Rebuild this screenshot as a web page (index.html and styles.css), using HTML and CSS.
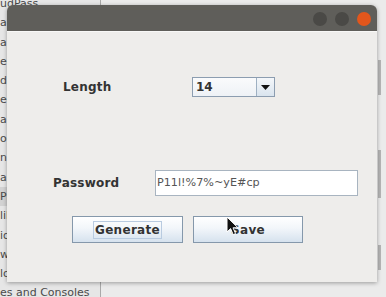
FILE: index.html
```html
<!DOCTYPE html>
<html lang="en">
<head>
  <meta charset="UTF-8" />
  <title>Password Generator</title>
  <link rel="stylesheet" href="styles.css">
</head>
<body>
  <div class="desktop">
    <ul class="sidebar">
      <li>udPass</li>
      <li>admin</li>
      <li>api</li>
      <li>eclipse</li>
      <li>data</li>
      <li>editor</li>
      <li>app</li>
      <li>ogg</li>
      <li>native</li>
      <li>assets</li>
      <li class="selected">Properties</li>
      <li>lib</li>
      <li>iql</li>
      <li>www</li>
      <li>logs</li>
      <li>es and Consoles</li>
    </ul>
    <div class="scrollbar">
      <span class="thumb t1"></span>
      <span class="thumb t2"></span>
      <span class="thumb t3"></span>
    </div>

    <div class="window">
      <div class="titlebar">
        <span class="dot"></span>
        <span class="dot"></span>
        <span class="dot close"></span>
      </div>
      <div class="content">
        <div class="row row-length">
          <label class="label length-label">Length</label>
          <div class="combo">
            <span class="combo-value">14</span>
            <span class="combo-arrow">
              <svg width="9" height="5" viewBox="0 0 9 5"><path d="M0 0h9L4.5 5z" fill="#111"/></svg>
            </span>
          </div>
        </div>
        <div class="row row-password">
          <label class="label password-label">Password</label>
          <div class="field">P11l!%7%~yE#cp</div>
        </div>
        <div class="row row-buttons">
          <button class="btn generate"><span class="focus">Generate</span></button>
          <button class="btn save">Save</button>
        </div>
      </div>
    </div>

    <svg class="cursor" width="14" height="20" viewBox="0 0 14 20">
      <path d="M1 1v15l3.6-3.4 2.6 6 2.4-1-2.6-5.8H12z" fill="#111" stroke="#fff" stroke-width="1"/>
    </svg>
  </div>
</body>
</html>
```

FILE: styles.css
```css
* {
  box-sizing: border-box;
}

html, body {
  margin: 0;
  padding: 0;
  width: 100%;
  height: 100%;
  overflow: hidden;
  background: #ebebeb;
  font-family: 'DejaVu Sans', sans-serif;
}

.desktop {
  position: relative;
  width: 386px;
  height: 297px;
  display: flex;
}

.sidebar {
  list-style: none;
  margin: -6px 0 0;
  padding: 0;
  width: 101px;
  border-right: 1px solid #a9a9a9;
  background: #e6e6e6;
  font-size: 11px;
  line-height: 19.3px;
  color: #4a4a4a;
  white-space: nowrap;
  overflow: hidden;
}

.sidebar li {
  padding-left: 0;
}

.sidebar li.selected {
  background: #d2d2d2;
}

.scrollbar {
  flex: 1;
  position: relative;
}

.thumb {
  position: absolute;
  right: 5px;
  width: 3px;
  background: #b4b4b4;
}

.t1 { top: 60px; height: 35px; }
.t2 { top: 150px; height: 48px; }
.t3 { top: 245px; height: 25px; }

.window {
  position: absolute;
  left: 7px;
  top: 5px;
  width: 370px;
  height: 277px;
  display: flex;
  flex-direction: column;
  border-radius: 6px 6px 0 0;
  box-shadow: 0 1px 4px rgba(0, 0, 0, 0.35);
  overflow: hidden;
}

.titlebar {
  height: 26px;
  background: #5f5e5a;
  display: flex;
  justify-content: flex-end;
  align-items: center;
  gap: 8px;
  padding-right: 6px;
  padding-top: 1px;
}

.dot {
  width: 14px;
  height: 14px;
  border-radius: 50%;
  background: #4a4946;
}

.dot.close {
  background: #e2561c;
}

.content {
  flex: 1;
  background: #eeedeb;
  border-top: 1px solid #f8f8f7;
  display: flex;
  flex-direction: column;
}

.row {
  display: flex;
  align-items: center;
}

.label {
  font-size: 12px;
  font-weight: bold;
  color: #333;
  letter-spacing: 0.2px;
}

.row-length {
  margin-top: 45px;
  height: 20px;
}

.length-label {
  padding-left: 56px;
  width: 185px;
}

.combo {
  width: 83px;
  height: 20px;
  display: flex;
  border: 1px solid #8c9db0;
  background: linear-gradient(#fafbfc, #eef2f6);
}

.combo-value {
  flex: 1;
  font-size: 12px;
  font-weight: bold;
  color: #333;
  padding-left: 3px;
  line-height: 18px;
}

.combo-arrow {
  width: 18px;
  border-left: 1px solid #9eb0c2;
  background: linear-gradient(#f4f7fa, #d9e4ee);
  display: flex;
  justify-content: center;
  align-items: center;
}

.row-password {
  margin-top: 73px;
  height: 26px;
}

.password-label {
  padding-left: 46px;
  width: 148px;
}

.field {
  width: 203px;
  height: 26px;
  border: 1px solid #a8b4c0;
  background: #fff;
  font-size: 11.2px;
  color: #555;
  line-height: 24px;
  padding-left: 1px;
}

.row-buttons {
  margin-top: 20px;
  padding-left: 65px;
  gap: 10px;
}

.btn {
  width: 111px;
  height: 27px;
  border: 1px solid #8598ab;
  background: linear-gradient(#ffffff, #f2f6fa 45%, #d6e2ee);
  font-family: 'DejaVu Sans', sans-serif;
  font-size: 12px;
  font-weight: bold;
  letter-spacing: 0.3px;
  color: #333;
  padding: 0;
  display: flex;
  justify-content: center;
  align-items: center;
}

.btn.save {
  width: 110px;
}

.focus {
  border: 1px solid #b9cbe0;
  padding: 1px 1px;
}

.cursor {
  position: absolute;
  left: 226px;
  top: 216px;
}
```
